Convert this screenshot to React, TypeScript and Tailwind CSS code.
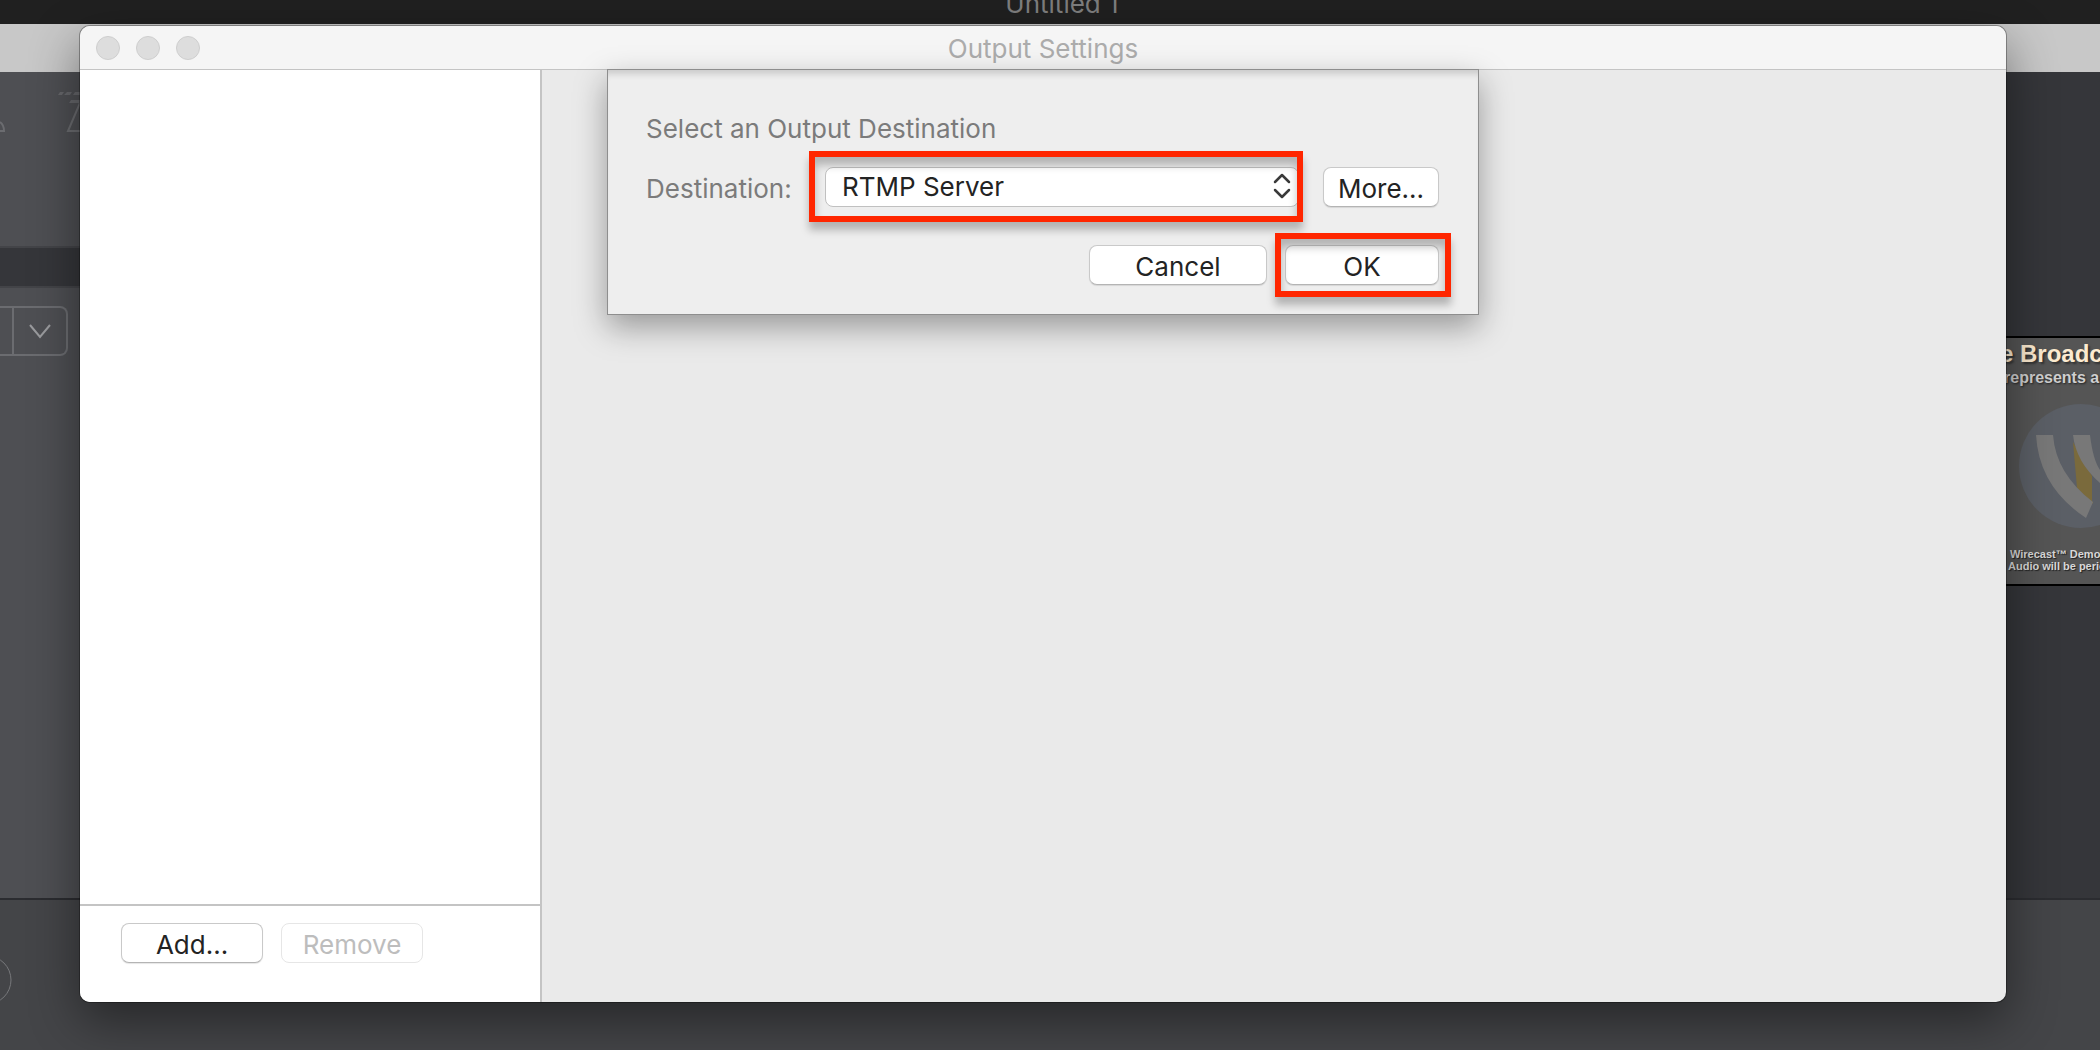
import { useState } from "react";
import { clsx } from "clsx";

const destinations = ["RTMP Server", "Record to Disk", "Virtual Camera"];

interface PushButtonProps {
  children: React.ReactNode;
  className?: string;
  disabled?: boolean;
  onClick?: () => void;
}

function PushButton({ children, className, disabled, onClick }: PushButtonProps) {
  return (
    <button
      type="button"
      disabled={disabled}
      onClick={onClick}
      className={clsx(
        "h-10 rounded-lg border bg-white pt-1 text-[26px] leading-8",
        disabled
          ? "border-[#e6e6e6] text-[#bdbdbd]"
          : "border-[#c9c9c9] border-b-[#b4b4b4] text-[#232323] shadow-[0_1px_1px_rgba(0,0,0,0.1)]",
        className
      )}
    >
      {children}
    </button>
  );
}

/* Red callout frame laid over a control */
function Callout({ className }: { className: string }) {
  return (
    <div
      className={clsx(
        "pointer-events-none absolute border-6 border-[#ff2600] shadow-[0_8px_8px_rgba(0,0,0,0.25),inset_0_8px_8px_rgba(0,0,0,0.25)]",
        className
      )}
    />
  );
}

function ShotTools() {
  return (
    <svg className="block h-[174px] w-20" viewBox="0 0 80 174" fill="none" stroke="#6b6c70" strokeWidth="2">
      <path d="M0 50 Q4 53 4 59 H0" />
      <path d="M58 23 l2 -3 h4 l-2 3z M64 23 l3 -3 h5 l-2 3z M73 23 l2 -3 h5 v3z" fill="#66676b" stroke="none" />
      <path d="M69 31 l2 -3 h9 v3z" fill="#66676b" stroke="none" />
      <path d="M80 31 L68 59 H80" />
    </svg>
  );
}

function LeftRail() {
  return (
    <div className="flex w-20 flex-col bg-[#4e4f53]">
      <ShotTools />
      <div className="h-[42px] border-y-2 border-[#434448] bg-[#35363a]" />
      <div className="mt-[18px] flex h-[50px] w-[68px] rounded-r-lg border-2 border-l-0 border-[#6b6c70]">
        <div className="w-3" />
        <div className="flex flex-1 items-center justify-center border-l-2 border-[#6b6c70]">
          <svg className="h-4 w-[22px]" viewBox="0 0 22 16" fill="none" stroke="#9a9b9e" strokeWidth="2">
            <path d="M1 2 L11 14 L21 2" />
          </svg>
        </div>
      </div>
    </div>
  );
}

function Preview() {
  return (
    <div className="mt-[264px] h-[250px] overflow-hidden border-y-2 border-black bg-[#555555] font-['Liberation_Sans'] font-bold whitespace-nowrap">
      <p className="-ml-1.5 pt-0.5 text-2xl leading-7 text-[#fdebd0] [text-shadow:2px_2px_2px_#333]">e Broadc</p>
      <p className="-ml-0.5 text-base leading-5 text-[#cfcfcf] [text-shadow:1px_1px_2px_#222]">represents a</p>
      <svg className="mt-4 block h-[126px] w-[94px]" viewBox="0 0 94 126">
        <circle cx="75" cy="62" r="62" fill="#5b5f66" />
        <path d="M67 38 L86 72 V97 L87 98 L87 100 L71 84z" fill="#7a6a3c" />
        <path d="M67 31 H84 Q87 56 94 66 V79 Q70 58 67 31z" fill="#787878" />
        <path d="M30 31 H47 Q50 70 87 98 L80 114 Q33 83 30 31z" fill="#787878" />
      </svg>
      <div className="mt-[18px] text-[11px] leading-3 text-[#d8d8d8] [text-shadow:1px_1px_1px_#222]">
        <p className="pl-1">Wirecast™ Demo</p>
        <p className="pl-0.5">Audio will be perio</p>
      </div>
    </div>
  );
}

function Backdrop() {
  return (
    <div className="flex h-full flex-col">
      <div className="flex h-6 items-end justify-center overflow-hidden bg-[#202020] pb-1 pl-6">
        <span className="text-[26px] leading-8 text-[#7e7e7e]">Untitled 1</span>
      </div>
      <div className="h-12 bg-[#c8c8c8]" />
      <div className="flex flex-1 justify-between bg-[#35363a]">
        <LeftRail />
        <div className="w-[94px]">
          <Preview />
        </div>
      </div>
      <div className="h-38 border-t-2 border-[#2b2c30] bg-[#444548] pt-[52px]">
        <svg className="block h-14 w-3" viewBox="0 0 12 56" fill="none" stroke="#77787b">
          <circle cx="-13" cy="28" r="24" />
        </svg>
      </div>
    </div>
  );
}

function DestinationSheet() {
  const [destination, setDestination] = useState(destinations[0]);

  return (
    <div className="relative mx-auto -mt-px h-[246px] w-[872px] border border-[#8e8e8e] bg-[#eeeeee] px-[38px] pt-[43px] shadow-[0_12px_30px_rgba(0,0,0,0.35),inset_0_8px_6px_-4px_rgba(0,0,0,0.15)]">
      <h2 className="text-[26px] leading-8 text-[#7b7b7b]">Select an Output Destination</h2>
      <div className="mt-[22px] flex h-10 items-center">
        <label htmlFor="destination" className="w-[179px] pt-1 text-[26px] leading-8 text-[#7b7b7b]">
          Destination:
        </label>
        <div className="relative">
          <select
            id="destination"
            value={destination}
            onChange={(e) => setDestination(e.target.value)}
            className="block h-10 w-[474px] appearance-none rounded-lg border border-[#c0c0c0] bg-white pl-4 text-[26px] leading-8 text-[#232323]"
          >
            {destinations.map((d) => (
              <option key={d}>{d}</option>
            ))}
          </select>
          <svg
            className="pointer-events-none absolute top-1.5 right-2 h-[26px] w-[18px]"
            viewBox="0 0 18 26"
            fill="none"
            stroke="#3a3a3a"
            strokeWidth="2.5"
            strokeLinecap="round"
            strokeLinejoin="round"
          >
            <path d="M2 9 L9 2 L16 9 M2 17 L9 24 L16 17" />
          </svg>
          <Callout className="-top-4 -right-1 -left-4 h-[71px]" />
        </div>
        <PushButton className="mr-px ml-auto w-[116px]">More...</PushButton>
      </div>
      <div className="mt-[38px] mr-px flex justify-end gap-[18px]">
        <PushButton className="w-[178px]">Cancel</PushButton>
        <div className="relative">
          <PushButton className="w-[154px]">OK</PushButton>
          <Callout className="-top-3 -right-3 -left-2.5 h-16" />
        </div>
      </div>
    </div>
  );
}

function OutputSettings() {
  return (
    <div className="absolute top-[26px] right-[94px] bottom-12 left-20 flex flex-col overflow-hidden rounded-[10px] bg-[#eaeaea] shadow-[0_0_0_1px_rgba(0,0,0,0.3),0_18px_50px_rgba(0,0,0,0.45)]">
      <header className="relative flex h-11 items-center justify-center border-b border-[#c4c4c4] bg-[#f5f5f5]">
        <div className="absolute left-4 flex gap-4">
          {["Close", "Minimize", "Zoom"].map((name) => (
            <button key={name} aria-label={name} className="size-6 rounded-full border border-[#cecece] bg-[#dddddd]" />
          ))}
        </div>
        <h1 className="pt-0.5 text-[26px] leading-8 text-[#acacac]">Output Settings</h1>
      </header>
      <div className="flex flex-1">
        <aside className="flex w-[462px] flex-col border-r-2 border-[#c4c4c4] bg-white">
          <div className="flex-1" />
          <div className="flex h-[98px] gap-[18px] border-t-2 border-[#c4c4c4] pt-[17px] pl-[41px]">
            <PushButton className="w-[142px]">Add...</PushButton>
            <PushButton className="w-[142px]" disabled>
              Remove
            </PushButton>
          </div>
        </aside>
      </div>
    </div>
  );
}

export default function App() {
  return (
    <div className="relative h-screen overflow-hidden font-['Inter',sans-serif]">
      <Backdrop />
      <OutputSettings />
      {/* Sheet hangs from the title bar of the settings window */}
      <div className="absolute top-[70px] right-[94px] left-20">
        <DestinationSheet />
      </div>
    </div>
  );
}
